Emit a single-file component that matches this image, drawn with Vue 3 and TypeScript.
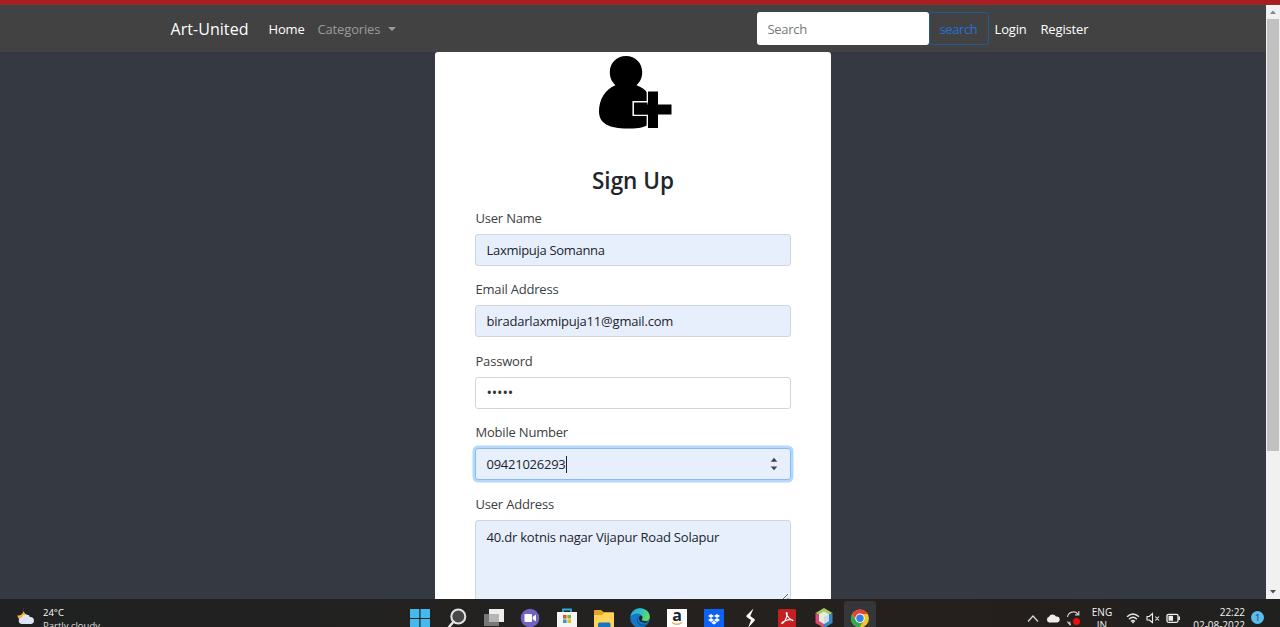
<script setup lang="ts">
interface Field {
  label: string
  value: string
  kind: 'text' | 'password' | 'number' | 'area'
  cls: string
}

const fields: Field[] = [
  { label: 'User Name', value: 'Laxmipuja Somanna', kind: 'text', cls: 'filled name' },
  { label: 'Email Address', value: 'biradarlaxmipuja11@gmail.com', kind: 'text', cls: 'filled email' },
  { label: 'Password', value: '•••••', kind: 'password', cls: 'secret' },
  { label: 'Mobile Number', value: '09421026293', kind: 'number', cls: 'filled focused' },
  { label: 'User Address', value: '40.dr kotnis nagar Vijapur Road Solapur', kind: 'area', cls: 'filled area' },
]
</script>

<template>
  <div class="screen">
    <div class="redline"></div>
    <div class="viewport">
      <div class="page">
        <nav class="navbar">
          <a class="brand">Art-United</a>
          <a class="link home">Home</a>
          <a class="link categories">Categories<i class="caret"></i></a>
          <div class="search-box">Search</div>
          <button class="search-btn">search</button>
          <a class="link login">Login</a>
          <a class="link register">Register</a>
        </nav>
        <main class="card">
          <svg class="avatar" viewBox="0 0 76 76" width="76" height="76">
            <path d="M28 1C37.400 1 44.200 8 44.200 17.300C44.200 23 42 27 38.500 30.200C43.500 32 47 34.500 49.500 38V70C45 73 38 73.500 29 73.500C12 73.500 1 69 1 56.500C1 44.500 7 34.500 17.500 30.200C14 27 11.800 23 11.800 17.300C11.800 8 18.600 1 28 1Z" />
            <path d="M50 46.800H35.200V60.200H50V66" fill="none" stroke="#fff" stroke-width="1.500" />
            <path d="M50 36.500H60V49.500H73.500V59.500H60V73H50V59.500H36.500V49.500H50Z" />
            <path d="M49.300 36V47M49.300 60V73.500" stroke="#fff" stroke-width="1.300" />
          </svg>
          <h1>Sign Up</h1>
          <form class="form">
            <div v-for="f in fields" :key="f.label" class="group">
              <label>{{ f.label }}</label>
              <div class="control" :class="f.cls">
                <span class="value">{{ f.value }}</span>
                <template v-if="f.kind === 'number'">
                  <i class="cursor"></i>
                  <svg class="spinner" width="8" height="14" viewBox="0 0 8 14"><path d="M.7 4.700L4 .8L7.300 4.700ZM.7 9.500L4 13.200L7.300 9.500Z" fill="#444" /></svg>
                </template>
                <svg v-if="f.kind === 'area'" class="grip" width="8" height="8" viewBox="0 0 8 8"><path d="M1 7L7 1M5 7.500L7.500 5" stroke="#666" fill="none" /></svg>
              </div>
            </div>
          </form>
        </main>
      </div>
      <aside class="scrollbar">
        <svg width="14" height="14" viewBox="0 0 14 14"><path d="M4 9L7 5.500L10 9Z" fill="#888" /></svg>
        <div class="track"><div class="thumb"></div></div>
        <svg width="14" height="14" viewBox="0 0 14 14"><path d="M4 5L7 8.500L10 5Z" fill="#505050" /></svg>
      </aside>
    </div>

    <footer class="taskbar">
      <div class="weather">
        <svg width="20" height="20" viewBox="0 0 20 20">
          <path d="M7.500 1C7 5 9 8 13.500 8.500L10 14H4L1 8.500C5 9 8.500 6 7.500 1Z" fill="#f3b52f" />
          <path d="M5.500 17A3.300 3.300 0 0 1 5.500 10.500A4.700 4.700 0 0 1 14 10A3.600 3.600 0 0 1 15.500 17Z" fill="#dbe5f5" />
        </svg>
        <div class="weather-text"><span>24°C</span><span>Partly cloudy</span></div>
      </div>
      <div class="apps">
        <div class="app"><svg width="20" height="20" viewBox="0 0 20 20"><path d="M0 1H9.300V10H0ZM10.500 1H20V10H10.500ZM0 11H9.300V20H0ZM10.500 11H20V20H10.500Z" fill="#43b9ee" /></svg></div>
        <div class="app"><svg width="20" height="20" viewBox="0 0 20 20"><circle cx="11.300" cy="8.500" r="7" fill="#484848" stroke="#e4e4e4" stroke-width="2" /><path d="M6.500 13.800L2 19" stroke="#e4e4e4" stroke-width="2.500" stroke-linecap="round" /></svg></div>
        <div class="app"><svg width="20" height="20" viewBox="0 0 20 20"><path d="M5 1H20V14H5Z" fill="#eee" /><path d="M0 6H15V18H0Z" fill="#777" /><path d="M5 6H15V14H5Z" fill="#b5b5b5" /></svg></div>
        <div class="app"><svg width="20" height="20" viewBox="0 0 20 20"><circle cx="10" cy="10" r="9.300" fill="#7262c4" /><path d="M4.500 6.500Q4.500 6 5 6H11Q12 6 12 7V13Q12 14 11 14H5.500Q4.500 14 4.500 13ZM12.800 8.800L16 6.500V13.500L12.800 11.200Z" fill="#fff" /></svg></div>
        <div class="app"><svg width="20" height="20" viewBox="0 0 20 20"><path d="M6 4V1.500H14V4" fill="none" stroke="#2bb0dc" stroke-width="1.800" /><path d="M0 4H20V20H0Z" fill="#f5f5f5" /><path d="M6 7H9.600V10.600H6Z" fill="#e8532c" /><path d="M10.400 7H14V10.600H10.400Z" fill="#7db82b" /><path d="M6 11.400H9.600V15H6Z" fill="#299fd8" /><path d="M10.400 11.400H14V15H10.400Z" fill="#f3b51d" /></svg></div>
        <div class="app"><svg width="20" height="20" viewBox="0 0 20 20"><path d="M0 3Q0 2 1 2H7L9.500 4H19Q20 4 20 5V20H0Z" fill="#e4a429" /><path d="M0 7H8L10 5H20V20H0Z" fill="#ffd45a" /><path d="M4 20V16Q4 14.500 5.500 14.500H15Q16.500 14.500 16.500 16V20Z" fill="#1677c0" /></svg></div>
        <div class="app"><svg width="20" height="20" viewBox="0 0 20 20">
          <defs><linearGradient id="edgeTop" x1="0" x2="1" y1="0" y2=".5"><stop offset="0" stop-color="#23a5dc" /><stop offset=".6" stop-color="#34c5c0" /><stop offset="1" stop-color="#66dc58" /></linearGradient></defs>
          <circle cx="10" cy="10" r="9.800" fill="#1478c6" />
          <path d="M.4 8.500C1.500 3 5.500 .2 10 .2C15.500 .2 20 4 19.800 9C19.700 12.500 16 14 12.500 12.800C11 12.200 13 11 12.300 8.500C11.300 4.500 4 4.500 .4 8.500Z" fill="url(#edgeTop)" />
          <path d="M9 8C6 11 8 17 14 16.500C16 16.300 17.500 15.700 19 14L16 18H11C7 16 5 11 9 8Z" fill="#115697" />
          <path d="M12.500 12.800C10.500 12 13 11 12.300 8.500C11.500 7 9.500 7.500 9 9.500C8.500 13 12 16 18.500 14C20 15 17 13 12.500 12.800Z" fill="#222326" />
        </svg></div>
        <div class="app"><svg width="20" height="20" viewBox="0 0 20 20"><path d="M0 1H20V20H0Z" fill="#fff" /><text x="10" y="13" text-anchor="middle" class="glyph">a</text><path d="M5 14.500Q10 18 15 14.500" fill="none" stroke="#f3a847" stroke-width="1.300" /></svg></div>
        <div class="app"><svg width="20" height="20" viewBox="0 0 20 20"><path d="M0 1H20V20H0Z" fill="#0b62f5" /><path d="M7 6L10 8L7 10L4 8ZM13 6L16 8L13 10L10 8ZM7 10L10 12L7 14L4 12ZM13 10L16 12L13 14L10 12ZM7.200 14.700L10 12.800L12.800 14.700L10 16.500Z" fill="#fff" /></svg></div>
        <div class="app"><svg width="20" height="20" viewBox="0 0 20 20"><path d="M12.500 .5L5.500 7.500Q5 8.500 6 9.200L10 12L7 20L13.500 12.800Q14.300 11.700 13.300 11L9.300 8Z" fill="#fff" /></svg></div>
        <div class="app"><svg width="20" height="20" viewBox="0 0 20 20"><rect x="1" y="1" width="18" height="19" rx="2" fill="#c51f24" /><path d="M9.700 4.500C8.500 4.500 10 10 15.500 12.500C17 13 14 10.500 9 12.500C4 14.500 4 16 6 15C9 12.500 11 6 9.700 4.500Z" fill="none" stroke="#fff" stroke-width="1.200" /></svg></div>
        <div class="app"><svg width="20" height="20" viewBox="0 0 20 20"><path d="M10 0L18.500 5L10 9.500L1.500 5Z" fill="#a8cb66" /><path d="M1.500 5L10 9.500V20L1.500 15Z" fill="#d84d72" /><path d="M18.500 5L10 9.500V20L18.500 15Z" fill="#3886c8" /><path d="M10 3.500L15 6.300V13L10 16L5 13V6.300Z" fill="#e6edda" /><path d="M10 9V16L15 13V6.300Z" fill="#c8dbea" /></svg></div>
        <div class="app active"><svg width="20" height="20" viewBox="0 0 20 20"><circle cx="10" cy="10.500" r="9" fill="#f5c52a" /><path d="M2.200 6A9 9 0 0 1 17.800 6H10L7 12.500Z" fill="#e64235" /><path d="M2.200 6A9 9 0 0 0 9.500 19.500L13.500 13L6.500 13.300Z" fill="#36a852" /><circle cx="10" cy="10.300" r="4.700" fill="#fff" /><circle cx="10" cy="10.300" r="3.700" fill="#347fe8" /></svg></div>
      </div>
      <div class="tray">
        <svg class="chev" width="12" height="20" viewBox="0 0 12 20"><path d="M1 12.500L6 7L11 12.500" fill="none" stroke="#ddd" stroke-width="1.200" /></svg>
        <svg class="cloud" width="14" height="20" viewBox="0 0 14 20"><path d="M3 13.500A3 3 0 0 1 3 7.800A4 4 0 0 1 10 7.500A3 3 0 0 1 11.300 13.500Z" fill="#eee" /></svg>
        <svg class="sync" width="16" height="20" viewBox="0 0 16 20"><path d="M1.500 8A6 6 0 0 1 12 5M12.800 2V5.800H9M3.800 16.500V12.800M1.500 12.500Q2.500 15 5 15.500" fill="none" stroke="#ccc" stroke-width="1.200" /><circle cx="10.500" cy="12.500" r="3.500" fill="#f20c0c" /></svg>
        <div class="lang"><span>ENG</span><span>IN</span></div>
        <svg class="wifi" width="14" height="20" viewBox="0 0 14 20"><path d="M1 7.800Q7 2.200 13 7.800M3 10.200Q7 6.400 11 10.200M5 12.500Q7 10.500 9 12.500" fill="none" stroke="#e5e5e5" stroke-width="1.300" /><circle cx="7" cy="13.300" r="1" fill="#eee" /></svg>
        <svg class="mute" width="14" height="20" viewBox="0 0 14 20"><path d="M1 7.500H3.300L6.500 4.500V13.500L3.300 11H1ZM9.300 7.500L13 11.500M13 7.500L9.300 11.500" fill="none" stroke="#eee" stroke-width="1.100" /></svg>
        <svg class="battery" width="15" height="20" viewBox="0 0 15 20"><rect x="1" y="5.300" width="11" height="8" rx="1.500" fill="none" stroke="#eee" stroke-width="1.300" /><path d="M2.500 6.800H7V11.800H2.500ZM12.500 7.500H14V11H12.500Z" fill="#eee" /></svg>
        <div class="clock"><span>22:22</span><span>02-08-2022</span></div>
        <b class="badge">1</b>
      </div>
    </footer>
  </div>
</template>

<style>
html, body { margin: 0; overflow: hidden; }
</style>

<style scoped>
* { box-sizing: border-box; }
.screen {
  width: 1280px;
  height: 627px;
  display: flex;
  flex-direction: column;
  overflow: hidden;
  background: #353941;
  font-family: "Open Sans", "Noto Sans", sans-serif;
  font-size: 13px;
  letter-spacing: -.2px;
  color: #212529;
}
.redline { flex: none; height: 5px; background: #a91d20; border-bottom: 1px solid #8b3032; }
.viewport { flex: none; height: 594px; display: flex; overflow: hidden; }
.page { flex: 1; display: flex; flex-direction: column; }
.navbar {
  flex: none;
  height: 47px;
  padding: 0 0 0 170.500px;
  display: flex;
  align-items: center;
  background: #424242;
  color: #fff;
  white-space: nowrap;
}
.brand { width: 98px; font-size: 16px; letter-spacing: .05px; }
.link { font-size: 13px; letter-spacing: -.15px; }
.home { width: 49px; }
.categories { width: 439px; display: flex; align-items: center; color: #9b9b9b; }
.caret { margin-left: 8px; border: 4px solid transparent; border-top-color: #9b9b9b; border-bottom: 0; }
.search-box {
  width: 172px;
  height: 33px;
  padding-left: 11px;
  line-height: 34px;
  border-radius: 3px;
  background: #fff;
  color: #73797e;
  letter-spacing: -.3px;
}
.search-btn {
  width: 60px;
  height: 33px;
  padding: 0 0 0 0;
  border: 1px solid #245995;
  border-radius: 3px;
  background: transparent;
  color: #246fdc;
  font: inherit;
  letter-spacing: -.4px;
}
.login { margin-left: 6px; width: 46px; }
.card {
  width: 396px;
  height: 600px;
  margin-left: 435px;
  flex: none;
  display: flex;
  flex-direction: column;
  align-items: center;
  background: #fff;
  border-radius: 3px 3px 0 0;
}
.avatar { margin: 3px 0 0 6px; flex: none; }
h1 { margin: 33px 0 0; height: 34px; line-height: 34px; font-size: 22.500px; font-weight: 600; letter-spacing: 0; }
.form { width: 316px; margin-top: 7.500px; }
.group { height: 71.600px; }
label { display: block; height: 28px; line-height: 24px; padding-left: .5px; color: #3c4043; }
.control {
  position: relative;
  display: flex;
  align-items: center;
  height: 32px;
  padding: 0 11px 0 10.500px;
  border: 1px solid #d0d6dd;
  border-radius: 3px;
  background: #fff;
  white-space: nowrap;
}
.filled { background: #e7effd; }
.name { letter-spacing: -.3px; }
.focused { border-color: #85bcf6; box-shadow: 0 0 0 2.500px #b6d8fb; letter-spacing: -.25px; }
.secret { color: #333; letter-spacing: -.15px; font-size: 14.500px; }
.cursor { width: 1px; height: 17px; background: #222; }
.spinner { margin-left: auto; margin-right: 1.500px; }
.area { height: 90px; align-items: flex-start; padding-top: 7px; }
.grip { position: absolute; right: 1px; top: 72px; }
.scrollbar { width: 14px; background: #f1f1f1; display: flex; flex-direction: column; }
.scrollbar svg { flex: none; }
.track { flex: 1; padding: 0 1px; }
.thumb { height: 432px; background: #c1c1c1; }
.taskbar {
  flex: none;
  height: 28px;
  display: flex;
  background: linear-gradient(90deg, #202122, #242220 50%, #251f1d 75%, #20211f);
  color: #f2f2f2;
  font-size: 10px;
  letter-spacing: 0;
}
.weather { width: 402px; padding-left: 16px; display: flex; align-items: flex-start; }
.weather svg { margin-top: 8px; }
.weather-text { display: flex; flex-direction: column; margin: 7px 0 0 7px; line-height: 13px; font-size: 9.500px; color: #ddd; }
.weather-text span:first-child { color: #fff; }
.apps { width: 477px; height: 28px; display: flex; }
.app { width: 36.700px; height: 28px; padding-top: 9px; display: flex; justify-content: center; flex: none; overflow: hidden; }
.app svg { flex: none; }
.active { width: 32px; height: 26px; margin: 2px 0 0 2px; padding-top: 7px; background: #35363a; border-radius: 3px 3px 0 0; }
.glyph { font: 700 16px "Open Sans", sans-serif; fill: #20262e; }
.tray { display: flex; flex: 1; padding: 10px 0 0 148px; }
.tray svg { flex: none; }
.cloud { margin-left: 7px; }
.sync { margin-left: 6px; }
.lang, .clock { display: flex; flex-direction: column; line-height: 13px; margin-top: -3px; }
.lang { width: 22px; align-items: center; margin-left: 9px; }
.wifi { margin-left: 13px; }
.mute { margin-left: 6px; }
.battery { margin-left: 6px; }
.clock { width: 56px; margin-left: 8px; align-items: flex-end; letter-spacing: -.05px; }
.badge { width: 13px; height: 13px; margin: 2px 0 0 6px; border-radius: 50%; background: #5bbcf1; color: #17364c; font-size: 9px; line-height: 13px; text-align: center; font-weight: 400; }
</style>
